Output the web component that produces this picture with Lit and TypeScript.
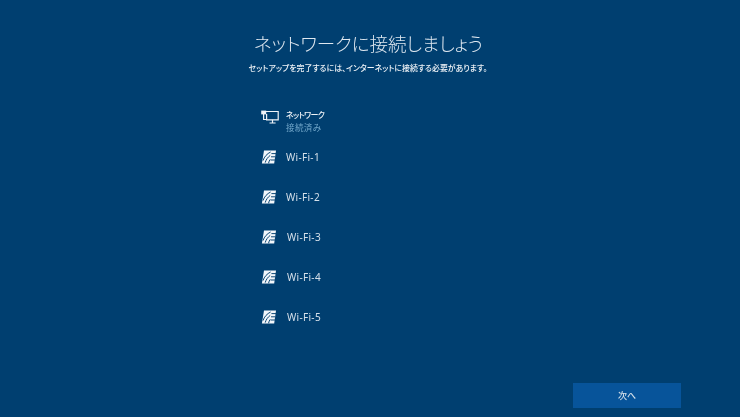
import { LitElement, html, css, svg } from "lit";
import { customElement } from "lit/decorators.js";

const wifiIcon = svg`<svg class="icon" width="16" height="14" viewBox="0 0 16 14">
  <path d="M3 .6H15L13.2 13.4H.9Z" fill="#f2f6fa"/>
  <g fill="none" stroke="#0b4775" stroke-width="1">
    <path d="M2 10.6C3.2 6.8 6.2 3.6 9.6 2"/>
    <path d="M4.2 12.6C5 9.6 7 7 9.2 5.4"/>
    <path d="M7.6 13.2C7.8 11.8 8.4 10.4 9.2 9.4"/>
    <path d="M10.4 3.6H15M10 6.8H14.4M9.6 10H14"/>
  </g>
</svg>`;

const netIcon = svg`<svg class="icon net-icon" width="18" height="14" viewBox="0 0 18 14">
  <g fill="none" stroke="#eef3f8" stroke-width="1.2">
    <path d="M5 1.5H17.2V9.8H5.6V4"/>
    <path d="M8.5 13H14.6M11.5 9.8V13"/>
    <path d="M2.6 4V9.5H5"/>
  </g>
  <rect x=".2" y=".6" width="5" height="3.8" fill="#eef3f8"/>
</svg>`;

@customElement("app-root")
export class AppRoot extends LitElement {
  static styles = css`
    :host {
      display: block;
      width: 740px;
      height: 417px;
      background: #003f70;
      color: #e6edf3;
      font-family: "Noto Sans CJK JP", "Noto Sans", sans-serif;
      font-feature-settings: "palt";
      overflow: hidden;
    }
    .page {
      height: 417px;
      box-sizing: border-box;
      display: flex;
      flex-direction: column;
      padding-top: 29px;
      filter: blur(0.3px);
    }
    h1 {
      margin: 0;
      width: 737px;
      text-align: center;
      font-size: 18.5px;
      line-height: 28px;
      font-weight: 300;
      color: #dfe8f0;
    }
    .sub {
      margin: 4px 0 0;
      width: 736px;
      text-align: center;
      font-size: 7.9px;
      line-height: 14px;
      font-weight: 500;
      color: #eef3f7;
    }
    .list {
      display: flex;
      flex-direction: column;
      margin: 29px 0 0 261px;
    }
    .row {
      height: 40px;
      display: flex;
      align-items: center;
      gap: 9px;
      font-size: 10px;
      font-family: "Noto Sans", "Noto Sans CJK JP", sans-serif;
      letter-spacing: 0.3px;
      color: #d5e0ea;
    }
    .row.net {
      height: 34px;
      gap: 7px;
      margin-bottom: -1px;
    }
    .icon {
      flex: none;
    }
    .net-icon {
      margin-bottom: 9px;
    }
    .texts {
      display: flex;
      flex-direction: column;
      font-family: "Noto Sans CJK JP", sans-serif;
    }
    .name {
      font-size: 8px;
      letter-spacing: -0.7px;
      line-height: 13px;
      font-weight: 500;
      color: #eef3f7;
    }
    .status {
      font-size: 8.6px;
      line-height: 13px;
      color: #6fa5c8;
    }
    .footer {
      margin-top: auto;
      display: flex;
      justify-content: flex-end;
      padding: 0 59px 9px 0;
    }
    button {
      width: 108px;
      height: 25px;
      border: 0;
      padding: 0;
      background: #07549a;
      color: #d5e0ea;
      font: 500 9px "Noto Sans CJK JP", sans-serif;
    }
  `;

  render() {
    const wifis = [
      { name: "Wi-Fi-1", shift: 0 },
      { name: "Wi-Fi-2", shift: 0 },
      { name: "Wi-Fi-3", shift: 1 },
      { name: "Wi-Fi-4", shift: 1 },
      { name: "Wi-Fi-5", shift: 1 },
    ];
    return html`<div class="page">
      <h1>ネットワークに接続しましょう</h1>
      <p class="sub">セットアップを完了するには、インターネットに接続する必要があります。</p>
      <div class="list">
        <div class="row net">
          ${netIcon}
          <div class="texts">
            <span class="name">ネットワーク</span>
            <span class="status">接続済み</span>
          </div>
        </div>
        ${wifis.map(
          (w) => html`<div class="row wifi">${wifiIcon}<span style="margin-left:${w.shift}px">${w.name}</span></div>`
        )}
      </div>
      <div class="footer"><button>次へ</button></div>
    </div>`;
  }
}
